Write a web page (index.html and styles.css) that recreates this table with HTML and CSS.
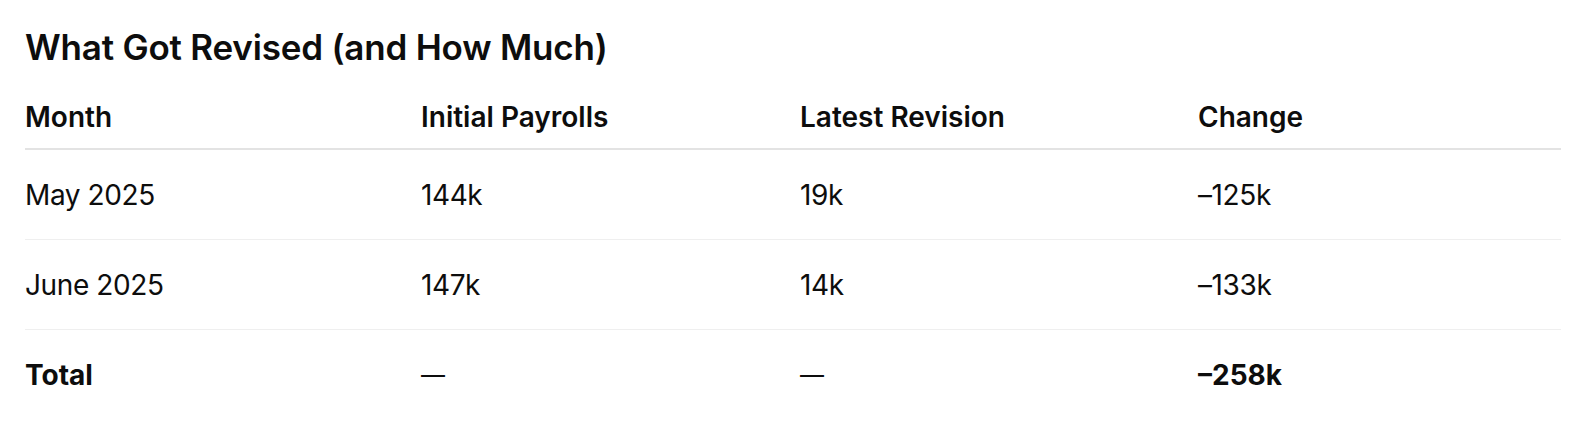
FILE: index.html
```html
<!DOCTYPE html>
<html lang="en">
<head>
<meta charset="utf-8">
<title>What Got Revised</title>
<link rel="stylesheet" href="styles.css">
</head>
<body>
<main class="page">
  <h2 class="title">What Got Revised (and How Much)</h2>
  <table class="rev-table">
    <colgroup>
      <col class="c1"><col class="c2"><col class="c3"><col class="c4">
    </colgroup>
    <thead>
      <tr><th>Month</th><th>Initial Payrolls</th><th>Latest Revision</th><th>Change</th></tr>
    </thead>
    <tbody>
      <tr><td>May 2025</td><td>144k</td><td>19k</td><td>–125k</td></tr>
      <tr><td>June 2025</td><td>147k</td><td>14k</td><td>–133k</td></tr>
      <tr class="total"><td>Total</td><td class="nil">—</td><td class="nil">—</td><td>–258k</td></tr>
    </tbody>
  </table>
</main>
</body>
</html>
```
FILE: styles.css
```css
html, body {
  margin: 0;
  padding: 0;
  background: #ffffff;
}
body {
  font-family: Inter, "Noto Sans", "Liberation Sans", sans-serif;
  color: #0d0d0d;
}
.page {
  padding: 26px 29px 0 25px;
}
.title {
  margin: 0 0 18px 0;
  font-size: 35px;
  line-height: 42px;
  font-weight: 600;
  letter-spacing: -0.2px;
}
.rev-table {
  width: 100%;
  border-collapse: collapse;
  table-layout: fixed;
  font-size: 28px;
  line-height: 36px;
}
.c1 { width: 396px; }
.c2 { width: 379px; }
.c3 { width: 398px; }
.c4 { width: auto; }
.rev-table th {
  text-align: left;
  font-weight: 600;
  padding: 13px 0 13px 0;
  border-bottom: 2px solid #e3e3e3;
}
.rev-table td {
  padding: 26.5px 0;
  border-bottom: 1px solid #efefef;
  font-weight: 400;
  letter-spacing: -0.4px;
}
.rev-table tr.total td {
  font-weight: 700;
  letter-spacing: 0;
  border-bottom: none;
}
.rev-table tr.total td.nil {
  font-weight: 400;
  font-size: 24px;
}
```
